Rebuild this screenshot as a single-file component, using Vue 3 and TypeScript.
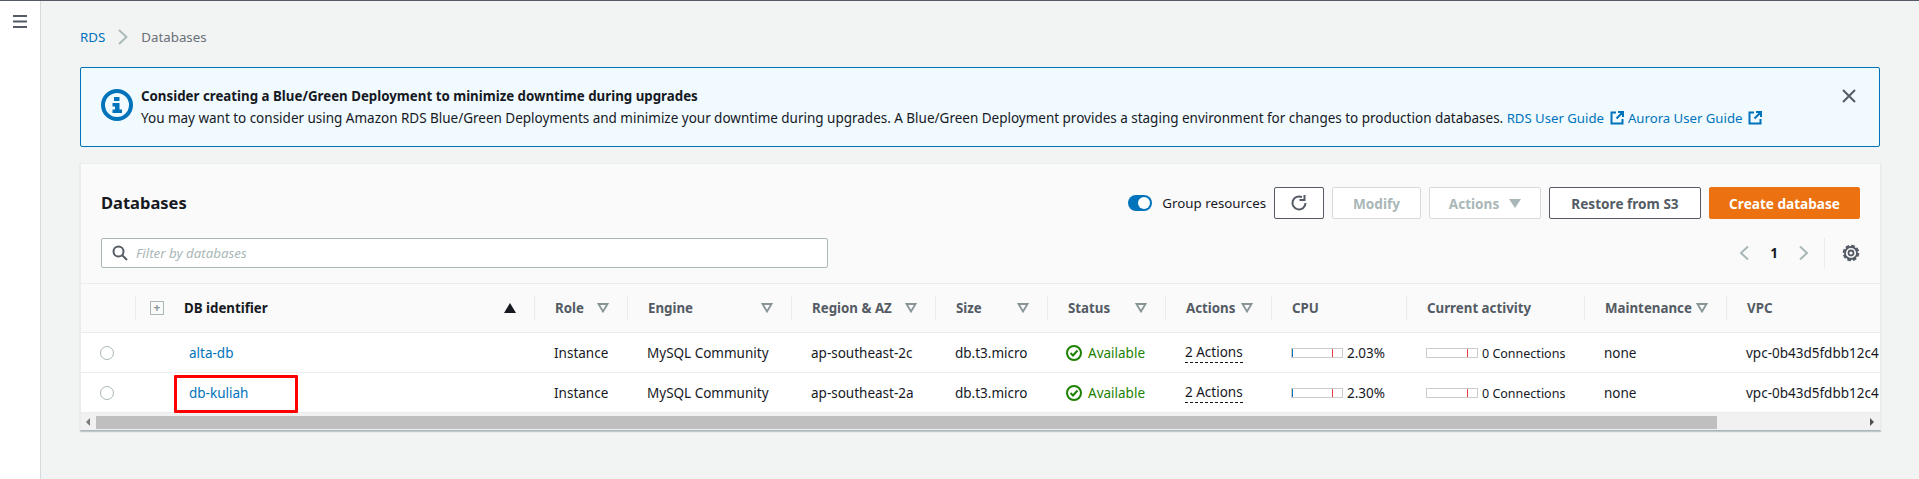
<script setup lang="ts">
interface Col { label: string; width: number; filter: boolean }
interface Row { name: string; az: string; cpu: string; highlight: boolean }

const cols: Col[] = [
  { label: 'Role', width: 93, filter: true },
  { label: 'Engine', width: 164, filter: true },
  { label: 'Region & AZ', width: 144, filter: true },
  { label: 'Size', width: 112, filter: true },
  { label: 'Status', width: 118, filter: true },
  { label: 'Actions', width: 106, filter: true },
  { label: 'CPU', width: 135, filter: false },
  { label: 'Current activity', width: 178, filter: false },
  { label: 'Maintenance', width: 142, filter: true },
  { label: 'VPC', width: 155, filter: false },
]
const rows: Row[] = [
  { name: 'alta-db', az: 'ap-southeast-2c', cpu: '2.03%', highlight: false },
  { name: 'db-kuliah', az: 'ap-southeast-2a', cpu: '2.30%', highlight: true },
]
</script>

<template>
  <div class="page">
    <aside class="side">
      <svg class="burger" width="14" height="13" viewBox="0 0 14 13"><path d="M0 1h14M0 6.500h14M0 12h14" stroke="#545b64" stroke-width="2" fill="none"/></svg>
    </aside>
    <main class="main">
      <nav class="crumbs">
        <a class="link">RDS</a>
        <svg width="10" height="16" viewBox="0 0 10 16"><path d="M1 1l7.500 7-7.500 7" stroke="#aab7b8" stroke-width="1.800" fill="none"/></svg>
        <span>Databases</span>
      </nav>

      <section class="flash">
        <svg class="flash-icon" width="32" height="32" viewBox="0 0 32 32">
          <circle cx="16" cy="16" r="14" fill="none" stroke="#0073bb" stroke-width="4"/>
          <rect x="13" y="8" width="5.500" height="4" fill="#0073bb"/>
          <path d="M11.500 14h7v6.500h2.500V24h-9.500v-3.500h2.500V17.500h-2.500z" fill="#0073bb"/>
        </svg>
        <div class="flash-body">
          <div class="flash-title">Consider creating a Blue/Green Deployment to minimize downtime during upgrades</div>
          <div class="flash-text">
            You may want to consider using Amazon RDS Blue/Green Deployments and minimize your downtime during upgrades. A Blue/Green Deployment provides a staging environment for changes to production databases.
            <a class="link guide">RDS User Guide</a>
            <svg class="ext" width="14" height="14" viewBox="0 0 14 14"><path d="M6 1.500H1.500v11h11V8M8 1h5v5M13 1L6.500 7.500" fill="none" stroke="#0073bb" stroke-width="2"/></svg>
            <a class="link guide">Aurora User Guide</a>
            <svg class="ext" width="14" height="14" viewBox="0 0 14 14"><path d="M6 1.500H1.500v11h11V8M8 1h5v5M13 1L6.500 7.500" fill="none" stroke="#0073bb" stroke-width="2"/></svg>
          </div>
        </div>
        <svg class="close" width="14" height="14" viewBox="0 0 14 14"><path d="M1 1l12 12M13 1L1 13" stroke="#545b64" stroke-width="2" fill="none"/></svg>
      </section>

      <section class="card">
        <header class="card-head">
          <div class="title-row">
            <h1 class="title">Databases</h1>
            <div class="tools">
              <span class="toggle"><span class="knob"></span></span>
              <span class="toggle-label">Group resources</span>
              <button class="btn refresh">
                <svg width="18" height="18" viewBox="0 0 18 18"><path d="M15.500 9A6.500 6.500 0 1 1 12 3.200" fill="none" stroke="#545b64" stroke-width="2"/><path d="M14.500 1v5H9.500" fill="none" stroke="#545b64" stroke-width="2"/></svg>
              </button>
              <button class="btn off modify">Modify</button>
              <button class="btn off actions">Actions <span class="caret"></span></button>
              <button class="btn restore">Restore from S3</button>
              <button class="btn primary">Create database</button>
            </div>
          </div>
          <div class="filter-row">
            <div class="search">
              <svg width="16" height="16" viewBox="0 0 16 16"><circle cx="6.500" cy="6.500" r="5" fill="none" stroke="#545b64" stroke-width="2"/><path d="M10.500 10.500l4.500 4.500" stroke="#545b64" stroke-width="2"/></svg>
              <span class="placeholder">Filter by databases</span>
            </div>
            <div class="pager">
              <svg width="12" height="16" viewBox="0 0 12 16"><path d="M10 1.500L3 8l7 6.500" fill="none" stroke="#aab7b8" stroke-width="2"/></svg>
              <span class="page-num">1</span>
              <svg width="12" height="16" viewBox="0 0 12 16"><path d="M2 1.500L9 8l-7 6.500" fill="none" stroke="#aab7b8" stroke-width="2"/></svg>
              <span class="pager-rule"></span>
              <svg width="18" height="18" viewBox="0 0 18 18">
                <circle cx="9" cy="9" r="2.500" fill="none" stroke="#545b64" stroke-width="1.800"/>
                <circle cx="9" cy="9" r="6" fill="none" stroke="#545b64" stroke-width="1.800"/>
                <circle cx="9" cy="9" r="7.300" fill="none" stroke="#545b64" stroke-width="2" stroke-dasharray="3.730 2"/>
              </svg>
            </div>
          </div>
        </header>

        <div class="table-wrap">
          <table class="table">
            <colgroup>
              <col style="width: 54px" />
              <col style="width: 399px" />
              <col v-for="c in cols" :key="c.label" :style="{ width: c.width + 'px' }" />
            </colgroup>
            <thead>
              <tr>
                <th></th>
                <th>
                  <div class="th th-first">
                    <span class="expand"><span class="plus">+</span></span>
                    <span class="th-main">DB identifier</span>
                    <svg width="12" height="10" viewBox="0 0 12 10"><path d="M6 0l6 10H0z" fill="#16191f"/></svg>
                  </div>
                </th>
                <th v-for="c in cols" :key="c.label">
                  <div class="th">
                    <span class="th-label">{{ c.label }}</span>
                    <svg v-if="c.filter" width="12" height="10" viewBox="0 0 12 10"><path d="M1.500 1h9L6 8.500z" fill="none" stroke="#879596" stroke-width="1.800"/></svg>
                  </div>
                </th>
              </tr>
            </thead>
            <tbody>
              <tr v-for="r in rows" :key="r.name">
                <td class="radio-cell"><span class="radio"></span></td>
                <td class="name-cell">
                  <a class="link">{{ r.name }}</a>
                  <span v-if="r.highlight" class="mark"></span>
                </td>
                <td>Instance</td>
                <td>MySQL Community</td>
                <td>{{ r.az }}</td>
                <td>db.t3.micro</td>
                <td>
                  <span class="status">
                    <svg width="16" height="16" viewBox="0 0 16 16"><circle cx="8" cy="8" r="7" fill="none" stroke="#1d8102" stroke-width="2"/><path d="M4.500 8l2.500 2.500L11.500 5.500" fill="none" stroke="#1d8102" stroke-width="2"/></svg>
                    Available
                  </span>
                </td>
                <td><span class="dash">2 Actions</span></td>
                <td>
                  <span class="metric">
                    <span class="bar"><i class="tick-blue"></i><i class="tick-red"></i></span>
                    <span>{{ r.cpu }}</span>
                  </span>
                </td>
                <td>
                  <span class="metric">
                    <span class="bar"><i class="tick-red"></i></span>
                    <span class="small">0 Connections</span>
                  </span>
                </td>
                <td>none</td>
                <td class="vpc">vpc-0b43d5fdbb12c4</td>
              </tr>
            </tbody>
          </table>
        </div>

        <div class="scroll">
          <span class="arrow-l"></span>
          <span class="thumb"></span>
          <span class="arrow-r"></span>
        </div>
      </section>
    </main>
  </div>
</template>

<style>
html, body { margin: 0; background: #f2f3f3; }
</style>

<style scoped>
.page {
  display: flex;
  height: 479px;
  overflow: hidden;
  border-top: 1px solid #545b64;
  box-sizing: border-box;
  background: #f2f3f3;
  color: #16191f;
  font-family: "Noto Sans", Roboto, sans-serif;
  font-size: 13.5px;
}
.side {
  flex: none;
  width: 27px;
  background: #fff;
  border-right: 1px solid #d5dbdb;
  padding: 14px 0 0 13px;
}
.burger { display: block; }
.main { flex: 1; min-width: 0; padding: 26px 39px 0 39px; }
.link { color: #0073bb; text-decoration: none; }
.guide { font-size: 13.200px; }
.crumbs {
  display: flex;
  align-items: center;
  gap: 13px;
  height: 20px;
  color: #687078;
  font-size: 13.3px;
}
.flash {
  margin-top: 20px;
  height: 80px;
  box-sizing: border-box;
  display: flex;
  align-items: center;
  border: 1px solid #0073bb;
  border-radius: 2px;
  background: #f1faff;
  padding: 0 20px;
}
.flash-icon { flex: none; margin: 0 8px 4px 0; }
.flash-body { flex: 1; line-height: 22px; }
.flash-title { font-weight: 700; font-size: 13.3px; }
.flash-text { word-spacing: -0.1px; }
.ext { vertical-align: -2px; margin: 0 4px 0 6px; }
.close { flex: none; align-self: flex-start; margin: 21px 3px 0 0; }
.card {
  margin-top: 16px;
  background: #fff;
  border: 1px solid #eaeded;
  border-bottom-color: #aab7b8;
  box-shadow: 0 1px 1px rgba(0, 28, 36, 0.2);
  width: 1801px;
  box-sizing: border-box;
}
.card-head {
  background: #fafafa;
  padding: 23px 20px 15px;
  height: 119px;
  box-sizing: border-box;
}
.title-row { display: flex; align-items: center; justify-content: space-between; }
.title { margin: 0 0 1px; font-size: 16.500px; font-weight: 700; line-height: 31px; }
.tools { display: flex; align-items: center; }
.toggle {
  width: 24px;
  height: 16px;
  border-radius: 8px;
  background: #0073bb;
  position: relative;
  margin-right: 10px;
}
.knob {
  position: absolute;
  right: 2px;
  top: 2px;
  width: 12px;
  height: 12px;
  border-radius: 50%;
  background: #fff;
}
.toggle-label { margin-right: 8px; white-space: nowrap; font-size: 13.3px; }
.btn {
  height: 32px;
  box-sizing: border-box;
  border: 1px solid #545b64;
  border-radius: 2px;
  background: #fff;
  color: #545b64;
  font-family: inherit;
  font-size: 13.600px;
  font-weight: 700;
  padding: 0;
  margin-left: 8px;
  display: flex;
  align-items: center;
  justify-content: center;
  gap: 10px;
}
.refresh { width: 50px; margin-left: 0; }
.off { border-color: #d5dbdb; color: #aab7b8; }
.modify { width: 89px; }
.actions { width: 112px; }
.restore { width: 152px; }
.primary { width: 151px; background: #ec7211; border-color: #ec7211; color: #fff; }
.caret {
  width: 0;
  height: 0;
  border-left: 6px solid transparent;
  border-right: 6px solid transparent;
  border-top: 9px solid #aab7b8;
}
.filter-row {
  display: flex;
  align-items: center;
  justify-content: space-between;
  margin-top: 19px;
}
.search {
  width: 727px;
  height: 30px;
  box-sizing: border-box;
  border: 1px solid #aab7b8;
  border-radius: 2px;
  background: #fff;
  display: flex;
  align-items: center;
  gap: 8px;
  padding-left: 10px;
  font-size: 13.3px;
}
.placeholder { font-style: italic; color: #aab7b8; }
.pager { display: flex; align-items: center; }
.page-num { width: 48px; text-align: center; font-weight: 700; }
.pager-rule { width: 1px; height: 30px; background: #eaeded; margin: 0 17px 0 14px; }
.table-wrap { overflow: hidden; }
.table { width: 1799px; table-layout: fixed; border-collapse: separate; border-spacing: 0; font-size: 13.5px; }
th {
  height: 50px;
  box-sizing: border-box;
  padding: 0;
  background: #fafafa;
  border-top: 1px solid #eaeded;
  border-bottom: 1px solid #eaeded;
  text-align: left;
  font-weight: 700;
  font-size: 13.3px;
  color: #545b64;
}
.th {
  display: flex;
  align-items: center;
  justify-content: space-between;
  height: 24px;
  padding: 0 18px 0 20px;
  border-left: 1px solid #eaeded;
}
.th-first {
  color: #16191f;
  justify-content: flex-start;
  padding-left: 14px;
}
.th-main { flex: 1; margin-left: 20px; }
.th-label { white-space: nowrap; }
.expand {
  width: 14px;
  height: 14px;
  box-sizing: border-box;
  border: 1px solid #aab7b8;
  display: flex;
  align-items: center;
  justify-content: center;
  color: #879596;
  font-size: 12px;
  line-height: 1;
}
td {
  height: 40px;
  box-sizing: border-box;
  padding: 0 0 0 20px;
  border-bottom: 1px solid #eaeded;
  background: #fff;
  white-space: nowrap;
}
.radio-cell { padding-left: 19px; }
.radio {
  display: block;
  width: 14px;
  height: 14px;
  box-sizing: border-box;
  border: 1px solid #aab7b8;
  border-radius: 50%;
  background: #fff;
}
.name-cell { position: relative; padding-left: 54px; }
.mark {
  position: absolute;
  left: 39px;
  top: 2px;
  width: 124px;
  height: 38px;
  box-sizing: border-box;
  border: 3px solid #ff0000;
  border-radius: 1px;
}
.status { display: inline-flex; align-items: center; gap: 6px; color: #1d8102; vertical-align: middle; margin-left: -1px; }
.dash { display: inline-block; border-bottom: 1px dashed #16191f; line-height: 19px; vertical-align: middle; }
.metric { display: inline-flex; align-items: center; gap: 4px; vertical-align: middle; }
.small { font-size: 12.500px; }
.bar {
  position: relative;
  width: 52px;
  height: 10px;
  box-sizing: border-box;
  border: 1px solid #ccc;
  display: block;
}
.tick-blue { position: absolute; left: 0; top: 0; bottom: 0; width: 1px; background: #0073bb; }
.tick-red { position: absolute; right: 9px; top: 0; bottom: 0; width: 1px; background: #e0393e; }
.scroll {
  display: flex;
  align-items: flex-end;
  height: 17px;
  padding: 2px 0 1px;
  box-sizing: border-box;
  background: #f1f1f1;
}
.thumb { width: 1621px; height: 13px; background: #bfbfbf; margin-left: 6px; }
.arrow-l {
  width: 0;
  height: 0;
  margin: 0 0 3px 5px;
  border-top: 4px solid transparent;
  border-bottom: 4px solid transparent;
  border-right: 4px solid #7a7a7a;
}
.arrow-r {
  width: 0;
  height: 0;
  margin: 0 0 3px 153px;
  border-top: 4px solid transparent;
  border-bottom: 4px solid transparent;
  border-left: 4px solid #505050;
}
</style>
